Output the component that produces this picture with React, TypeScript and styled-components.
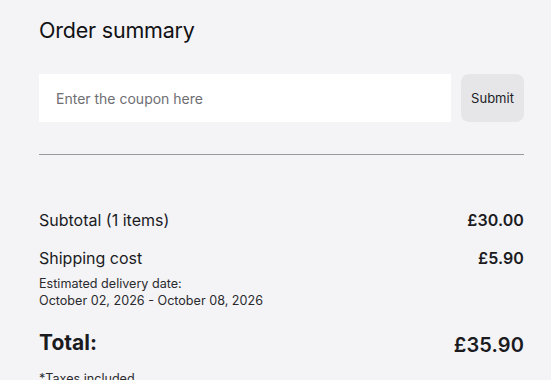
import React from "react";
import styled, { createGlobalStyle } from "styled-components";

const Global = createGlobalStyle`
  html, body { margin: 0; padding: 0; background: #f4f4f6; }
  body { font-family: Inter, "Noto Sans", sans-serif; color: #1b1b1f; }
  * { box-sizing: border-box; }
`;

const Page = styled.div`
  display: flex;
  flex-direction: column;
  padding: 15px 27px 0 39px;
  height: 380px;
  overflow: hidden;
`;

const Title = styled.h2`
  margin: 0;
  font-size: 21.5px;
  line-height: 30px;
  font-weight: 400;
  letter-spacing: -0.2px;
  color: #111114;
`;

const CouponRow = styled.form`
  display: flex;
  gap: 10px;
  margin-top: 29px;
`;

const CouponInput = styled.input`
  flex: 1;
  height: 48px;
  border: none;
  background: #ffffff;
  padding: 0 17px;
  font-family: inherit;
  font-size: 14px;
  color: #1b1b1f;
  outline: none;
  &::placeholder { color: #6e6e73; }
`;

const SubmitButton = styled.button`
  width: 63px;
  height: 48px;
  border: none;
  border-radius: 8px;
  background: #e6e6e8;
  font-family: inherit;
  font-size: 13px;
  color: #222226;
  padding: 0;
`;

const Divider = styled.hr`
  margin: 32px 0 0;
  border: none;
  border-top: 1px solid #9a9a9e;
`;

const Row = styled.div<{ $gap: number; $big?: boolean }>`
  display: flex;
  justify-content: space-between;
  align-items: center;
  margin-top: ${(p) => p.$gap}px;
  font-size: ${(p) => (p.$big ? "21px" : "16px")};
  line-height: ${(p) => (p.$big ? "28px" : "24px")};
  font-weight: ${(p) => (p.$big ? 700 : 400)};
`;

const Price = styled.span<{ $big?: boolean }>`
  font-weight: 600;
  font-size: ${(p) => (p.$big ? "20px" : "16px")};
  padding-top: ${(p) => (p.$big ? "4px" : "0")};
  letter-spacing: 0.1px;
`;

const Note = styled.div<{ $gap: number }>`
  margin-top: ${(p) => p.$gap}px;
  font-size: 12.6px;
  line-height: 17px;
  color: #2a2a2e;
`;

export default function App() {
  return (
    <>
      <Global />
      <Page>
        <Title>Order summary</Title>
        <CouponRow onSubmit={(e) => e.preventDefault()}>
          <CouponInput placeholder="Enter the coupon here" />
          <SubmitButton type="submit">Submit</SubmitButton>
        </CouponRow>
        <Divider />
        <Row $gap={53}>
          <span>Subtotal (1 items)</span>
          <Price>£30.00</Price>
        </Row>
        <Row $gap={14}>
          <span>Shipping cost</span>
          <Price>£5.90</Price>
        </Row>
        <Note $gap={5}>
          Estimated delivery date:
          <br />
          October 02, 2026 - October 08, 2026
        </Note>
        <Row $gap={18} $big>
          <span>Total:</span>
          <Price $big>£35.90</Price>
        </Row>
        <Note $gap={11}>*Taxes included</Note>
      </Page>
    </>
  );
}
